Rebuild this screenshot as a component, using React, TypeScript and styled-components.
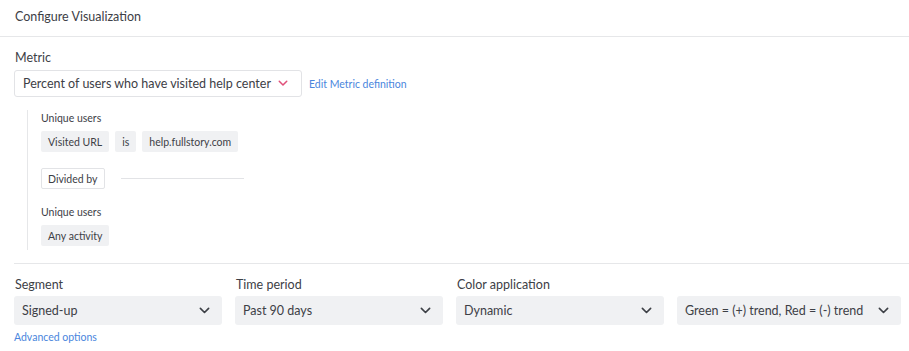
import styled, { createGlobalStyle } from 'styled-components';

const GlobalStyle = createGlobalStyle`
  html, body {
    margin: 0;
    padding: 0;
    background: #ffffff;
  }
  body {
    font-family: Lato, 'Liberation Sans', sans-serif;
    color: #3d4046;
  }
`;

const Chevron = ({ color = '#3d4046', size = 12 }: { color?: string; size?: number }) => (
  <svg width={size} height={(size * 2) / 3} viewBox='0 0 12 8' fill='none'>
    <path d='M1.5 1.5L6 6L10.5 1.5' stroke={color} strokeWidth='1.8' strokeLinecap='round' strokeLinejoin='round' />
  </svg>
);

const conditions = ['Visited URL', 'is', 'help.fullstory.com'];

const selectFields = [
  { label: 'Segment', value: 'Signed-up', width: 208 },
  { label: 'Time period', value: 'Past 90 days', width: 208 },
  { label: 'Color application', value: 'Dynamic', width: 208 },
  { label: '', value: 'Green = (+) trend, Red = (-) trend', width: 224 },
];

export default function App() {
  return (
    <Page>
      <GlobalStyle />
      <Header>Configure Visualization</Header>
      <Section>
        <FieldLabel>Metric</FieldLabel>
        <MetricRow>
          <MetricSelect>
            <span>Percent of users who have visited help center</span>
            <Chevron color='#e0507a' size={10} />
          </MetricSelect>
          <Link>Edit Metric definition</Link>
        </MetricRow>
        <Definition>
          <SubLabel>Unique users</SubLabel>
          <ChipRow>
            {conditions.map((c) => (
              <Chip key={c}>{c}</Chip>
            ))}
          </ChipRow>
          <DividerRow>
            <OutlineChip>Divided by</OutlineChip>
            <Rule />
          </DividerRow>
          <SubLabel>Unique users</SubLabel>
          <ChipRow>
            <Chip>Any activity</Chip>
          </ChipRow>
        </Definition>
      </Section>
      <Footer>
        <SelectRow>
          {selectFields.map((f) => (
            <Field key={f.value} $width={f.width}>
              <FieldLabel>{f.label || '\u00a0'}</FieldLabel>
              <Select>
                <span>{f.value}</span>
                <Chevron size={11} />
              </Select>
            </Field>
          ))}
        </SelectRow>
        <Link>Advanced options</Link>
      </Footer>
    </Page>
  );
}

const Page = styled.div`
  width: 909px;
  height: 351px;
  overflow: hidden;
  background: #fff;
`;

const Header = styled.div`
  height: 36px;
  box-sizing: border-box;
  display: flex;
  align-items: center;
  padding: 0 15px 3px;
  font-size: 12.5px;
  border-bottom: 1px solid #e6e7e9;
  height: 37px;
`;

const Section = styled.div`
  padding: 13px 14px 0;
`;

const FieldLabel = styled.div`
  font-size: 12.5px;
  line-height: 16px;
  padding-left: 1px;
  margin-bottom: 4px;
`;

const MetricRow = styled.div`
  display: flex;
  align-items: center;
  gap: 7px;
`;

const MetricSelect = styled.div`
  width: 288px;
  height: 27px;
  box-sizing: border-box;
  display: flex;
  align-items: center;
  justify-content: space-between;
  padding: 0 13px 0 8px;
  border: 1px solid #e2e3e6;
  border-radius: 3px;
  font-size: 12.5px;
`;

const Link = styled.a`
  display: block;
  color: #4a86dd;
  font-size: 10.5px;
  line-height: 14px;
  cursor: pointer;
`;

const Definition = styled.div`
  margin: 13px 0 0 13px;
  padding: 1px 0 0 13px;
  height: 140px;
  box-sizing: border-box;
  border-left: 1px solid #e6e7e9;
`;

const SubLabel = styled.div`
  font-size: 10.5px;
  line-height: 14px;
  margin-bottom: 6px;
`;

const ChipRow = styled.div`
  display: flex;
  gap: 6px;
`;

const Chip = styled.div`
  height: 21px;
  display: flex;
  align-items: center;
  padding: 0 7px;
  background: #f0f1f3;
  border-radius: 2px;
  font-size: 10.5px;
`;

const DividerRow = styled.div`
  display: flex;
  align-items: center;
  gap: 16px;
  margin: 16px 0 16px;
`;

const OutlineChip = styled(Chip)`
  background: #fff;
  border: 1px solid #e2e3e6;
  box-sizing: border-box;
  padding: 0 6px;
`;

const Rule = styled.div`
  width: 123px;
  height: 1px;
  background: #e2e3e6;
`;

const Footer = styled.div`
  margin: 13px 0 0 14px;
  padding-top: 13px;
  border-top: 1px solid #e6e7e9;
`;

const SelectRow = styled.div`
  display: flex;
  gap: 13px;
  margin-bottom: 5px;
`;

const Field = styled.div<{ $width: number }>`
  width: ${(p) => p.$width}px;
  ${FieldLabel} {
    margin-bottom: 3px;
  }
`;

const Select = styled.div`
  height: 29px;
  display: flex;
  align-items: center;
  justify-content: space-between;
  padding: 0 12px 0 8px;
  background: #f0f1f3;
  border-radius: 3px;
  font-size: 12.5px;
`;
